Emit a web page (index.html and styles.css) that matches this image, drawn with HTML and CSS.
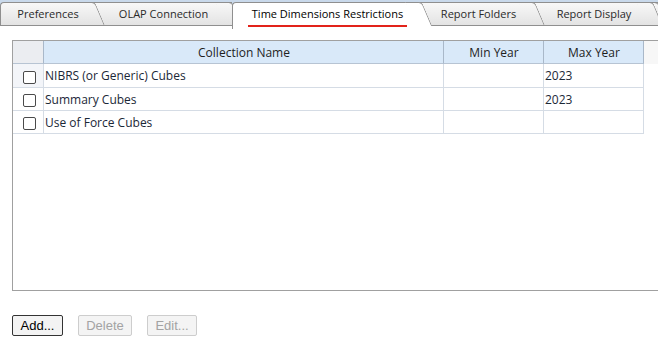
FILE: index.html
```html
<!DOCTYPE html>
<html>
<head>
    <meta charset="UTF-8">
    <title>Time Dimensions Restrictions</title>
    <link rel="stylesheet" href="styles.css">
</head>
<body>
    <div class="tabs">
        <div class="tab tab-prefs">Preferences</div>
        <div class="tab tab-olap">OLAP Connection</div>
        <div class="tab tab-time active"><span class="tab-label">Time Dimensions Restrictions</span></div>
        <div class="tab tab-folders">Report Folders</div>
        <div class="tab tab-display">Report Display</div>
        <div class="tab tab-more"></div>
    </div>

    <div class="panel">
        <div class="grid">
            <table class="collections">
                <thead>
                    <tr>
                        <th class="rowhead"></th>
                        <th class="col-name">Collection Name</th>
                        <th class="col-year">Min Year</th>
                        <th class="col-year">Max Year</th>
                        <th class="filler"></th>
                    </tr>
                </thead>
                <tbody>
                    <tr class="current">
                        <td class="rowhead"><span class="check"></span></td>
                        <td>NIBRS (or Generic) Cubes</td>
                        <td></td>
                        <td>2023</td>
                        <td class="filler"></td>
                    </tr>
                    <tr>
                        <td class="rowhead"><span class="check"></span></td>
                        <td>Summary Cubes</td>
                        <td></td>
                        <td>2023</td>
                        <td class="filler"></td>
                    </tr>
                    <tr>
                        <td class="rowhead"><span class="check"></span></td>
                        <td>Use of Force Cubes</td>
                        <td></td>
                        <td></td>
                        <td class="filler"></td>
                    </tr>
                </tbody>
            </table>
        </div>

        <div class="actions">
            <button class="btn btn-add">Add...</button>
            <button class="btn btn-delete" disabled>Delete</button>
            <button class="btn btn-edit" disabled>Edit...</button>
        </div>
    </div>
</body>
</html>
```

FILE: styles.css
```css
* {
    box-sizing: border-box;
}

html, body {
    margin: 0;
    overflow: hidden;
}

body {
    width: 658px;
    height: 347px;
    font-family: "Open Sans", "Noto Sans", sans-serif;
    background-color: #fff;
    color: #1e1e1e;
}

/* tab strip */

.tabs {
    display: flex;
    height: 26px;
    padding-top: 2px;
    background-color: #c9d9eb;
    border-bottom: 1px solid #8f8f8f;
}

.tab {
    position: relative;
    flex: none;
    height: 23px;
    line-height: 22px;
    text-align: center;
    font-size: 11px;
    color: #2a2a2a;
    background: linear-gradient(#f8f8f8, #e3e3e3);
    border-top: 1px solid #8f8f8f;
}

.tab::after {
    content: "";
    position: absolute;
    z-index: -1;
    top: -1px;
    bottom: 0;
    right: 0;
    width: 16px;
    background: inherit;
    border-top: 1px solid #8f8f8f;
    border-right: 1px solid #8f8f8f;
    border-top-right-radius: 4px;
    transform: skewX(23deg);
    transform-origin: top left;
}

.tab-prefs {
    width: 95px;
    z-index: 6;
    border-left: 1px solid #8f8f8f;
    border-top-left-radius: 4px;
}

.tab-olap {
    width: 137px;
    z-index: 5;
}

.tab-time {
    width: 190px;
}

.tab-folders {
    width: 113px;
    z-index: 4;
}

.tab-display {
    width: 118px;
    z-index: 3;
}

.tab-more {
    flex: 1;
    z-index: 2;
}

.tab.active {
    z-index: 10;
    height: 27px;
    margin-bottom: -4px;
    color: #000;
    background: #fff;
    border-left: 1px solid #8f8f8f;
    border-top-left-radius: 4px;
}

.tab.active::after {
    bottom: 3px;
}

.tab-label {
    padding: 0 4px 4px;
    border-bottom: 2px solid #e2231a;
}

/* collection grid */

.panel {
    padding: 14px 0 0 12px;
}

.grid {
    width: 660px;
    height: 251px;
    border: 1px solid #a0a0a0;
    border-right: none;
}

.collections {
    width: 100%;
    table-layout: fixed;
    border-collapse: separate;
    border-spacing: 0;
    font-size: 12px;
}

.collections th,
.collections td {
    height: 23px;
    padding: 0 0 0 1px;
    white-space: nowrap;
    vertical-align: middle;
}

.collections th {
    font-weight: normal;
    color: #1e1e1e;
    text-align: center;
    background-color: #d9e9f9;
    border-right: 1px solid #a9b8c9;
    border-bottom: 1px solid #b7c4d3;
}

.collections td {
    color: #1b2837;
    text-align: left;
    border-right: 1px solid #d5dce5;
    border-bottom: 1px solid #d5dce5;
}

.collections tr.current td {
    height: 24px;
}

.collections th.rowhead {
    width: 31px;
    background-color: #ebedf1;
}

.collections .col-name {
    width: 400px;
}

.collections .col-year {
    width: 100px;
}

.collections th.filler {
    background-color: #f7f7f7;
    border-right: none;
    border-bottom: none;
}

.collections td.filler {
    border-right: none;
    border-bottom: none;
}

.collections tr.current td.rowhead {
    background-color: #f3f5f9;
}

.check {
    display: block;
    width: 13px;
    height: 13px;
    margin: 3px 0 0 9px;
    border: 1px solid #4a4a4a;
    border-radius: 2px;
    background-color: #fff;
}

/* buttons */

.actions {
    display: flex;
    gap: 15px;
    margin-top: 24px;
}

.btn {
    height: 21px;
    padding: 0;
    font-family: "Liberation Sans", Arial, sans-serif;
    font-size: 13px;
    color: #000;
    background-color: #f3f3f3;
    border: 1px solid #333;
    border-radius: 2px;
}

.btn-add {
    width: 51px;
}

.btn-delete {
    width: 54px;
}

.btn-edit {
    width: 50px;
}

.btn:disabled {
    color: #a3a3a3;
    background-color: #f4f4f4;
    border-color: #cdcdcd;
}
```
